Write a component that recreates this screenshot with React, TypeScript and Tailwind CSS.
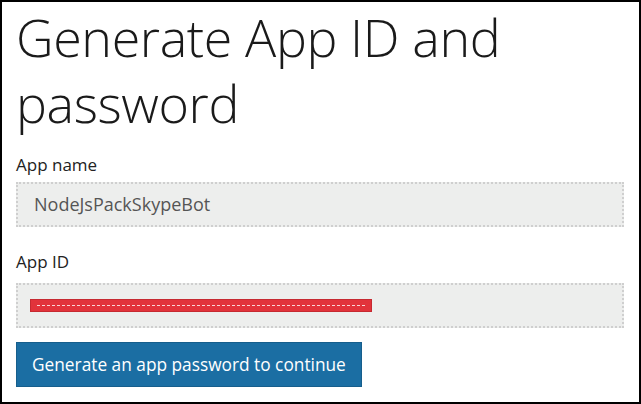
import React from 'react';

const fieldClass =
    'h-[45px] w-full flex items-center px-[16px] bg-[#edeeed] border-2 border-dotted border-[#cfcfcf] text-[#555] text-[18px]';

const App = () => {
    return (
        <div className="w-[641px] h-[404px] bg-white border-2 border-black pl-[14px] pr-[15px] pt-[2px] font-['Open_Sans',sans-serif] text-[#222]">
            <h1 className="font-light text-[52px] leading-[66px] tracking-[-0.4px] text-[#1a1a1a]">
                Generate App ID and
                <br />
                password
            </h1>

            <div className="mt-[18px]">
                <label className="block text-[17px] leading-[22px] text-[#222]">App name</label>
                <div className={`${fieldClass} mt-[6px]`}>NodeJsPackSkypeBot</div>
            </div>

            <div className="mt-[24px]">
                <label className="block text-[17px] leading-[22px] text-[#222]">App ID</label>
                <div className={`${fieldClass} mt-[10px] !px-[12px]`}>
                    {/* redacted value */}
                    <div className="h-[13px] w-[342px] bg-[#e2333b] border border-[#c62a31] flex items-center px-[6px]">
                        <div className="h-0 w-full border-t border-dashed border-white/80" />
                    </div>
                </div>
            </div>

            <button
                type="button"
                className="mt-[14px] h-[45px] px-[15px] bg-[#1b6ea3] text-white text-[17.3px] border border-[#165e8c]"
            >
                Generate an app password to continue
            </button>
        </div>
    );
};

export default App;
